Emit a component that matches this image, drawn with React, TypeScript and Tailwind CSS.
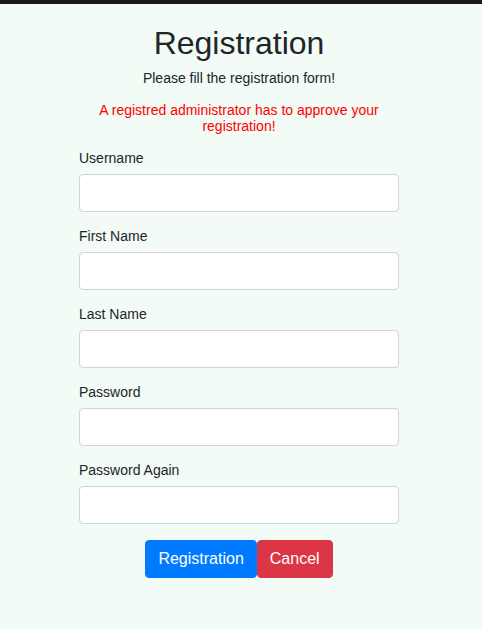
import React from "react";

const fields = ["Username", "First Name", "Last Name", "Password", "Password Again"];

export default function App() {
  return (
    <div className="min-h-[629px] bg-[#f2fbf5] text-[#212529] font-['Liberation_Sans',Arial,sans-serif]">
      <div className="h-[4px] bg-[#1b1b1b]" />
      <div className="flex justify-center pr-[4px]">
        <div className="w-[320px] flex flex-col">
          <h1 className="mt-[20px] text-[32px] leading-[38px] text-center">Registration</h1>
          <p className="mt-[6px] text-[14px] leading-[21px] text-center">Please fill the registration form!</p>
          <p className="mt-[13px] text-[14px] leading-[16px] text-center text-[#ff0000] px-[20px]">
            A registred administrator has to approve your registration!
          </p>
          <form className="mt-[12px] flex flex-col" onSubmit={(e) => e.preventDefault()}>
            {fields.map((f) => (
              <div key={f} className="mb-[12px]">
                <label className="block text-[14px] leading-[24px] mb-[4px]">{f}</label>
                <input
                  type={f.startsWith("Password") ? "password" : "text"}
                  className="block w-full h-[38px] bg-white border border-[#ced4da] rounded-[4px] px-3 outline-none"
                />
              </div>
            ))}
            <div className="mt-[4px] flex justify-center">
              <button className="h-[38px] px-[12px] bg-[#007bff] text-white text-[16px] rounded-[4px] border border-[#007bff]">
                Registration
              </button>
              <button type="button" className="h-[38px] px-[12px] bg-[#dc3545] text-white text-[16px] rounded-[4px] border border-[#dc3545]">
                Cancel
              </button>
            </div>
          </form>
        </div>
      </div>
    </div>
  );
}
